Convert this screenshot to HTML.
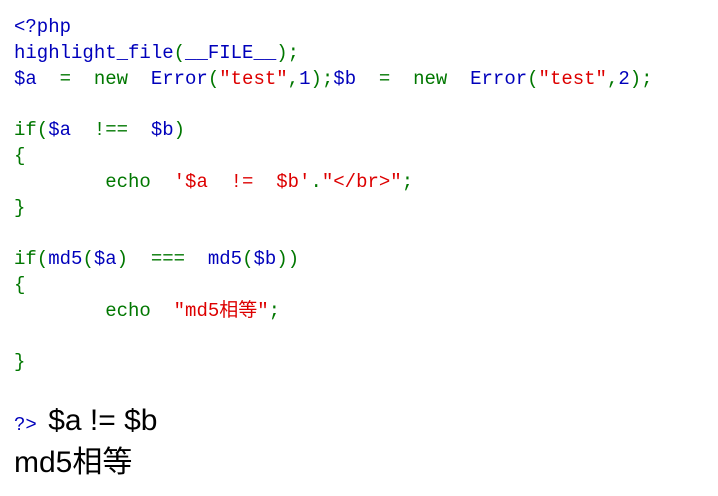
<!DOCTYPE html>
<html><head><meta charset="utf-8"><style>
body{margin:0;background:#fff;}
code{position:absolute;left:14px;top:15px;font-family:"Liberation Mono","Noto Sans CJK SC",monospace;font-size:19px;line-height:25.8px;white-space:pre;tab-size:8;color:#000;}
.d{color:#0000BB}.k{color:#007700}.s{color:#DD0000}
.t{position:absolute;left:14px;font-family:"Liberation Sans","Noto Sans CJK SC",sans-serif;font-size:30px;color:#000;white-space:pre;}
</style></head><body>
<code><span class="d">&lt;?php
highlight_file</span><span class="k">(</span><span class="d">__FILE__</span><span class="k">);
</span><span class="d">$a  </span><span class="k">=  new  </span><span class="d">Error</span><span class="k">(</span><span class="s">"test"</span><span class="k">,</span><span class="d">1</span><span class="k">);</span><span class="d">$b  </span><span class="k">=  new  </span><span class="d">Error</span><span class="k">(</span><span class="s">"test"</span><span class="k">,</span><span class="d">2</span><span class="k">);

if(</span><span class="d">$a  </span><span class="k">!==  </span><span class="d">$b</span><span class="k">)
{
	echo  </span><span class="s">'$a  !=  $b'</span><span class="k">.</span><span class="s">"&lt;/br&gt;"</span><span class="k">;
}

if(</span><span class="d">md5</span><span class="k">(</span><span class="d">$a</span><span class="k">)  ===  </span><span class="d">md5</span><span class="k">(</span><span class="d">$b</span><span class="k">))
{
	echo  </span><span class="s">"md5相等"</span><span class="k">;

}
</span></code>
<div class="t" style="top:404px;"><span style="font-family:'Liberation Mono',monospace;font-size:19px;color:#0000BB">?&gt; </span>$a != $b</div>
<div class="t" style="top:437px;">md5相等</div>
</body></html>
